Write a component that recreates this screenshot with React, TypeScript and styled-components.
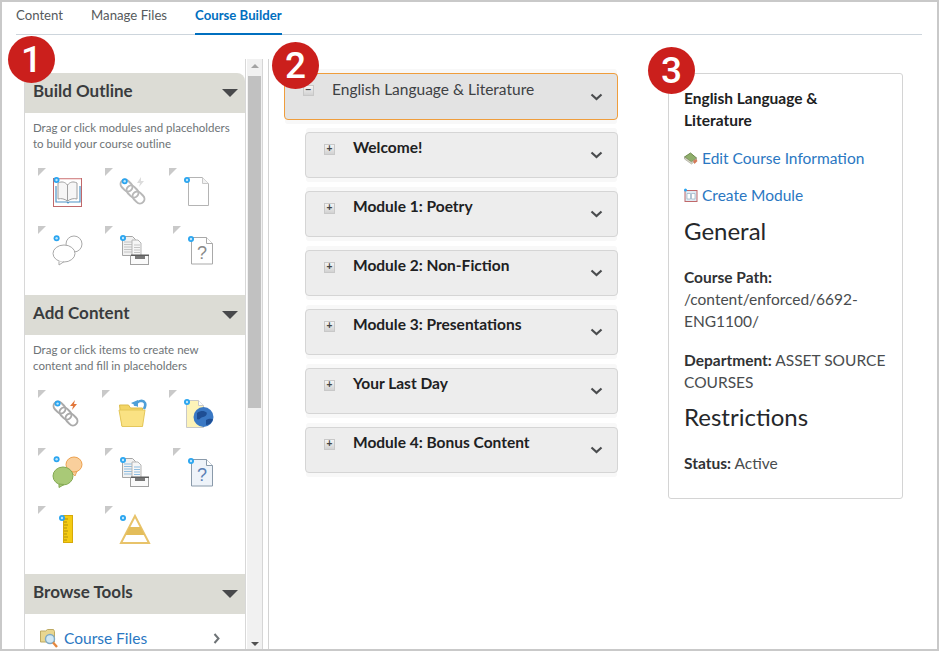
import React from 'react';
import styled, { createGlobalStyle } from 'styled-components';

const GlobalStyle = createGlobalStyle`
  html, body { margin: 0; padding: 0; background: #fff; }
  * { box-sizing: border-box; }
`;

const Page = styled.div`
  position: relative;
  width: 939px;
  height: 651px;
  border: 2px solid #c9c9c9;
  overflow: hidden;
  display: flex;
  flex-direction: column;
  font-family: Lato, 'Liberation Sans', sans-serif;
  color: #494c4e;
  background: #fff;
`;

const Badge = styled.div<{ $left: number; $top: number }>`
  position: absolute;
  left: ${(p) => p.$left}px;
  top: ${(p) => p.$top}px;
  width: 47px;
  height: 47px;
  border-radius: 50%;
  background: #cb1f1c;
  color: #fff;
  font: 500 37px/47px Roboto, 'Liberation Sans', sans-serif;
  text-align: center;
  z-index: 5;
`;

const Tabs = styled.nav`
  flex: none;
  height: 33px;
  margin: 0 15px 0 14px;
  display: flex;
  gap: 28px;
  border-bottom: 1px solid #cdd5dc;
`;

const Tab = styled.a<{ $active?: boolean }>`
  height: 33px;
  padding-top: 5px;
  font-size: 13.2px;
  line-height: 16px;
  font-weight: ${(p) => (p.$active ? 700 : 400)};
  color: ${(p) => (p.$active ? '#006fbf' : '#565a5c')};
  border-bottom: ${(p) => (p.$active ? '2px solid #006fbf' : 'none')};
`;

const Main = styled.div`
  flex: 1;
  min-height: 0;
  display: flex;
  padding-top: 24px;
`;

const Sidebar = styled.aside`
  flex: none;
  width: 267px;
  padding-left: 22px;
  display: flex;
  border-right: 1px solid #d3d3d3;
`;

const Panels = styled.div`
  flex: none;
  width: 222px;
  padding-top: 14px;
  overflow: hidden;
  border-left: 1px solid #d8d8d8;
  border-right: 1px solid #d8d8d8;
`;

const PanelHeader = styled.div<{ $rounded?: boolean }>`
  height: 40px;
  padding: 0 7px 0 8px;
  display: flex;
  align-items: center;
  justify-content: space-between;
  background: #dcdcd5;
  border-radius: ${(p) => (p.$rounded ? '8px 8px 0 0' : '0')};
`;

const PanelTitle = styled.span`
  margin-bottom: 6px;
  font-size: 17px;
  font-weight: 700;
  color: #3a3c3e;
`;

const Caret = styled.span`
  width: 0;
  height: 0;
  border-left: 8px solid transparent;
  border-right: 8px solid transparent;
  border-top: 8px solid #48494b;
`;

const PanelBody = styled.div<{ $height: number }>`
  height: ${(p) => p.$height}px;
  padding-top: 7px;
`;

const Hint = styled.p`
  margin: 0 0 16px 8px;
  font-size: 11.5px;
  line-height: 16px;
  color: #6e7376;
`;

const TileGrid = styled.div`
  display: grid;
  grid-template-columns: repeat(3, 67px);
  grid-auto-rows: 58px;
  padding-left: 13px;
`;

const Tile = styled.div<{ $nudge?: number }>`
  position: relative;
  padding: 8px 0 0 14px;
  &::before {
    content: '';
    position: absolute;
    left: ${(p) => p.$nudge ?? 0}px;
    top: 0;
    width: 8px;
    height: 8px;
    background: #c9c9c9;
    clip-path: polygon(0 0, 100% 0, 0 100%);
  }
  svg { display: block; overflow: visible; }
`;

const ToolRow = styled.div`
  display: flex;
  align-items: center;
  padding: 14px 0 0 14px;
  gap: 5px;
`;

const ToolLink = styled.a`
  flex: 1;
  font-size: 15.5px;
  line-height: 20px;
  color: #2a77c2;
`;

const ToolChevron = styled.svg`
  margin-right: 24px;
`;

const Scrollbar = styled.div`
  flex: none;
  width: 16px;
  margin-left: 1px;
  position: relative;
  background: #f1f1f1;
  border-right: 1px solid #d6d6d6;
`;

const ScrollThumb = styled.div`
  position: absolute;
  left: 1px;
  right: 1px;
  top: 17px;
  height: 332px;
  background: #c1c1c1;
`;

const ScrollArrow = styled.span<{ $down?: boolean }>`
  position: absolute;
  left: 4px;
  ${(p) => (p.$down ? 'bottom: 3px;' : 'top: 5px;')}
  width: 0;
  height: 0;
  border-left: 4px solid transparent;
  border-right: 4px solid transparent;
  ${(p) => (p.$down ? 'border-top: 4px solid #505050;' : 'border-bottom: 4px solid #a3a3a3;')}
`;

const Outline = styled.section`
  flex: none;
  width: 349px;
  padding: 14px 0 0 15px;
`;

const OutlineCard = styled.div<{ $root?: boolean }>`
  height: ${(p) => (p.$root ? 47 : 46)}px;
  margin: ${(p) => (p.$root ? '0 0 12px' : '0 0 13px 21px')};
  padding-top: ${(p) => (p.$root ? 6 : 5)}px;
  display: flex;
  align-items: flex-start;
  background: ${(p) => (p.$root ? '#e3e3e3' : '#ededed')};
  border: 1px solid ${(p) => (p.$root ? '#ef9d3c' : '#d5d5d5')};
  border-radius: 4px;
  box-shadow: 0 5px 0 -1px #f8f8f8, 0 -5px 0 -1px #f8f8f8;
`;

const Expander = styled.span<{ $root?: boolean }>`
  flex: none;
  width: 11px;
  height: 11px;
  margin: ${(p) => (p.$root ? 5 : 6)}px 0 0 18px;
  border: 1px solid #c8c8c8;
  background: linear-gradient(#f4f4f4, #d2d2d2);
  font: 700 10px/8px 'Liberation Sans', sans-serif;
  color: #444;
  text-align: center;
`;

const CardTitle = styled.span<{ $root?: boolean }>`
  flex: 1;
  margin-left: 18px;
  font-size: 15.5px;
  line-height: 18px;
  font-weight: ${(p) => (p.$root ? 400 : 700)};
  color: ${(p) => (p.$root ? '#3e4143' : '#202122')};
`;

const CardChevron = styled.svg`
  flex: none;
  margin: 13px 14px 0 0;
`;

const Details = styled.section`
  flex: none;
  margin: 14px 0 0 50px;
  width: 235px;
  height: 426px;
  padding: 13px 15px 0;
  border: 1px solid #d4d4d4;
  border-radius: 3px;
  font-size: 15.5px;
  line-height: 22px;
  color: #494c4e;
`;

const DetailTitle = styled.div`
  font-weight: 700;
  color: #202122;
  margin-bottom: 16px;
`;

const ActionLink = styled.a`
  display: flex;
  align-items: center;
  gap: 4px;
  height: 22px;
  margin-bottom: 15px;
  color: #2a77c2;
`;

const Heading = styled.h2<{ $pull: number }>`
  margin: -${(p) => p.$pull}px 0 21px;
  font-size: 24px;
  line-height: 29px;
  font-weight: 400;
  color: #25272a;
`;

const Field = styled.p`
  margin: 0 0 17px;
  b { color: #303234; }
`;

const Dot = ({ x, y }: { x: number; y: number }) => (
  <>
    <circle cx={x} cy={y} r={3} fill="#2aa5f0" />
    <circle cx={x} cy={y} r={1.2} fill="#bfe6fb" />
  </>
);

const Glyph = ({ children }: { children: React.ReactNode }) => (
  <svg width="32" height="32" viewBox="0 0 32 32">
    {children}
  </svg>
);

const IconBook = () => (
  <Glyph>
    <rect x="1.5" y="2.5" width="28" height="28" fill="#fff" stroke="#c0686a" />
    <path d="M2 3h27" stroke="#eebcbc" />
    <path d="M4 10v16h11l1 1 1-1h11V10" fill="none" stroke="#4f93c6" strokeWidth="1.2" />
    <path d="M6 7c4-2 7-1 9.500 2v16c-3-2-6-3-9.500-2zM25 7c-4-2-7-1-9.500 2v16c3-2 6-3 9.500-2z" fill="#f6f6f6" stroke="#a0a0a0" />
    <Dot x={4.5} y={4} />
  </Glyph>
);

const Chain = ({ stroke }: { stroke: string }) => (
  <g transform="translate(13.5 15.5) rotate(-45)" fill="none" stroke={stroke} strokeWidth="2">
    <rect x="-4.500" y="-15" width="9" height="13" rx="4.500" />
    <rect x="-4.500" y="-6.500" width="9" height="13" rx="4.500" />
    <rect x="-4.500" y="2" width="9" height="13" rx="4.500" />
  </g>
);

const IconChain = () => (
  <Glyph>
    <Chain stroke="#b8b8b8" />
    <path d="M22 1l-4 6 3 0-1 4 5-6-3 0z" fill="#dcdcdc" />
    <Dot x={5.7} y={5.3} />
  </Glyph>
);

const IconPage = () => (
  <Glyph>
    <path d="M2.5 1.500h14l6 6v22h-20z" fill="#fff" stroke="#b4b4b4" />
    <path d="M16.500 1.500v6h6" fill="#f2f2f2" stroke="#c8c8c8" />
    <Dot x={1} y={4} />
  </Glyph>
);

const IconBubbles = () => (
  <Glyph>
    <ellipse cx="22" cy="10" rx="8" ry="8" fill="#fff" stroke="#a9a9a9" />
    <ellipse cx="12" cy="19.500" rx="11" ry="8.500" fill="#fff" stroke="#a9a9a9" />
    <path d="M7 27.500l0 3.500 5-3.400" fill="#fff" stroke="#a9a9a9" />
    <Dot x={4.6} y={4.3} />
  </Glyph>
);

const IconStack = ({ tint }: { tint: string }) => (
  <Glyph>
    <path d="M3.500 2.500h10l3 3v16h-13z" fill="#f1f1f1" stroke="#a5a5a5" />
    <path d="M5 8h10M5 10.500h10M5 13h10M5 15.500h10M5 18h10" stroke={tint} />
    <path d="M13 6h6l3 3v13h-9z" fill="#f6f6f6" stroke="#b5b5b5" />
    <path d="M15 11h6M15 13.500h6M15 16h6M15 18.500h6" stroke={tint} />
    <rect x="11.500" y="21.500" width="18" height="9" fill="#fafafa" stroke="#a0a0a0" />
    <path d="M12 20.500h18v1.500H12z" fill="#5e5e5e" />
    <path d="M16 22h10v3H16z" fill="#777" />
    <Dot x={4} y={4} />
  </Glyph>
);

const IconQuestion = ({ fill, stroke, color }: { fill: string; stroke: string; color: string }) => (
  <Glyph>
    <path d="M5.500 3.500h15l6 6v20.500h-21z" fill={fill} stroke={stroke} />
    <path d="M20.500 3.500v6h6" fill="#fff" stroke={stroke} />
    <text x="16" y="25" textAnchor="middle" fontSize="18" fontFamily="'Liberation Sans', sans-serif" fill={color}>
      ?
    </text>
    <Dot x={5} y={5} />
  </Glyph>
);

const IconChainColor = () => (
  <Glyph>
    <Chain stroke="#aaaaaa" />
    <path d="M23 2l-5 6 3 0-1 4 5-6-3 0z" fill="#e2763a" />
    <Dot x={5.6} y={5.6} />
  </Glyph>
);

const IconFolder = () => (
  <Glyph>
    <path d="M0.500 7h9l2 3h12v18H3z" fill="#f3d565" stroke="#dcbc4a" />
    <path d="M0 12h26l-2.500 16.500H3z" fill="#fae283" stroke="#e4c75b" />
    <path d="M16 8c1-5 8-7 10-3 1 2 0 4-1 6" fill="none" stroke="#4f9fd8" strokeWidth="2.6" />
    <path d="M12 5l7-3v7z" fill="#4f9fd8" />
  </Glyph>
);

const IconGlobe = () => (
  <Glyph>
    <path d="M0.500 2.500h12l5 5v22h-17z" fill="#fdf3b8" stroke="#c9c9c9" />
    <path d="M12.500 2.500v5h5" fill="#fff" stroke="#c9c9c9" />
    <circle cx="17.500" cy="19" r="10" fill="#3a78c4" />
    <path d="M11 15c4-3 7-2 9-1s0 5-3 5-3 4-6 2zM20 22c3-2 6-1 7-1-1 3-3 6-7 6z" fill="#1e4e94" />
    <Dot x={1} y={4} />
  </Glyph>
);

const IconBubblesColor = () => (
  <Glyph>
    <path d="M25 15l-2 5-4-4z" fill="#f8cf9a" stroke="#e9a55c" />
    <ellipse cx="22" cy="8.500" rx="8" ry="7.500" fill="#f9cf9c" stroke="#eda14f" />
    <ellipse cx="11" cy="20" rx="10" ry="9" fill="#a9c977" stroke="#83a952" />
    <path d="M7 28l0 3.500 5-3z" fill="#a9c977" stroke="#83a952" />
    <Dot x={4.6} y={3.3} />
  </Glyph>
);

const IconRuler = () => (
  <Glyph>
    <rect x="11.500" y="1.500" width="9" height="27" fill="#f4cb12" stroke="#d6a90a" />
    <path d="M12 5h4M12 8h3M12 11h4M12 14h3M12 17h4M12 20h3M12 23h4M12 26h3" stroke="#a3840e" strokeWidth="0.8" />
    <Dot x={10} y={4} />
  </Glyph>
);

const IconPyramid = () => (
  <Glyph>
    <path d="M16 2l14 27H2z" fill="#fff" stroke="#e8c36a" strokeWidth="2" />
    <path d="M10.500 13h11l4 8h-19z" fill="#e3bd5a" />
    <Dot x={4} y={4} />
  </Glyph>
);

const IconCourseFiles = () => (
  <svg width="20" height="20" viewBox="0 0 20 20">
    <path d="M1.500 3h5l2-1.500h6l1 2V14h-14z" fill="#e8d690" stroke="#bda962" />
    <circle cx="11" cy="11" r="4.500" fill="#cfe8f6" stroke="#7fa9c4" strokeWidth="1.400" />
    <path d="M14 14.500l4 4.500" stroke="#e5873d" strokeWidth="2.400" />
  </svg>
);

const IconEdit = () => (
  <svg width="14" height="14" viewBox="0 0 14 14">
    <path d="M0.500 6l6-4 6 5-5 4z" fill="#8fae6b" stroke="#6d8a4d" />
    <path d="M0.500 6v2l7 5 5-4V7l-5 4z" fill="#d9d9c8" stroke="#8a8a7a" strokeWidth="0.5" />
    <path d="M9 10l3-2 1.500 2-3 3z" fill="#d67a58" />
  </svg>
);

const IconModule = () => (
  <svg width="14" height="14" viewBox="0 0 14 14">
    <rect x="1" y="2.500" width="12" height="11" fill="#dfeaf3" stroke="#c0686a" />
    <path d="M3 5.500h3.500v5.500H3zM7.500 5.500H11v5.500H7.500z" fill="#fff" stroke="#88a4bb" strokeWidth="0.6" />
    <circle cx="1.500" cy="2" r="1.500" fill="#2aa5f0" />
  </svg>
);

const buildTiles = [
  { nudge: 0, icon: <IconBook /> },
  { nudge: 0, icon: <IconChain /> },
  { nudge: -3, icon: <IconPage /> },
  { nudge: 0, icon: <IconBubbles /> },
  { nudge: 0, icon: <IconStack tint="#c4c4c4" /> },
  { nudge: 1, icon: <IconQuestion fill="#fff" stroke="#a9a9a9" color="#8a8a8a" /> },
];

const addTiles = [
  { nudge: 0, icon: <IconChainColor /> },
  { nudge: -3, icon: <IconFolder /> },
  { nudge: -3, icon: <IconGlobe /> },
  { nudge: 0, icon: <IconBubblesColor /> },
  { nudge: 0, icon: <IconStack tint="#8fbde0" /> },
  { nudge: 1, icon: <IconQuestion fill="#eef3f9" stroke="#8a9aaa" color="#5b7fb5" /> },
  { nudge: 0, icon: <IconRuler /> },
  { nudge: 0, icon: <IconPyramid /> },
];

const modules = ['Welcome!', 'Module 1: Poetry', 'Module 2: Non-Fiction', 'Module 3: Presentations', 'Your Last Day', 'Module 4: Bonus Content'];

const Card = ({ title, root }: { title: string; root?: boolean }) => (
  <OutlineCard $root={root}>
    <Expander $root={root}>{root ? '−' : '+'}</Expander>
    <CardTitle $root={root}>{title}</CardTitle>
    <CardChevron width="13" height="8" viewBox="0 0 13 8" fill="none" stroke="#4a4c4e" strokeWidth="2.2">
      <path d="M1.500 1.500L6.500 6l5-4.500" />
    </CardChevron>
  </OutlineCard>
);

export default function App() {
  return (
    <Page>
      <GlobalStyle />
      <Badge $left={6} $top={34}>1</Badge>
      <Badge $left={270} $top={40}>2</Badge>
      <Badge $left={646} $top={45}>3</Badge>

      <Tabs>
        <Tab>Content</Tab>
        <Tab>Manage Files</Tab>
        <Tab $active>Course Builder</Tab>
      </Tabs>

      <Main>
        <Sidebar>
          <Panels>
            <PanelHeader $rounded>
              <PanelTitle>Build Outline</PanelTitle>
              <Caret />
            </PanelHeader>
            <PanelBody $height={182}>
              <Hint>
                Drag or click modules and placeholders
                <br />
                to build your course outline
              </Hint>
              <TileGrid>
                {buildTiles.map((t, i) => (
                  <Tile key={i} $nudge={t.nudge}>{t.icon}</Tile>
                ))}
              </TileGrid>
            </PanelBody>
            <PanelHeader>
              <PanelTitle>Add Content</PanelTitle>
              <Caret />
            </PanelHeader>
            <PanelBody $height={239}>
              <Hint>
                Drag or click items to create new
                <br />
                content and fill in placeholders
              </Hint>
              <TileGrid>
                {addTiles.map((t, i) => (
                  <Tile key={i} $nudge={t.nudge}>{t.icon}</Tile>
                ))}
              </TileGrid>
            </PanelBody>
            <PanelHeader>
              <PanelTitle>Browse Tools</PanelTitle>
              <Caret />
            </PanelHeader>
            <ToolRow>
              <IconCourseFiles />
              <ToolLink>Course Files</ToolLink>
              <ToolChevron width="8" height="11" viewBox="0 0 8 11" fill="none" stroke="#6e7376" strokeWidth="2">
                <path d="M1.500 1l4 4.500-4 4.500" />
              </ToolChevron>
            </ToolRow>
          </Panels>
          <Scrollbar>
            <ScrollArrow />
            <ScrollThumb />
            <ScrollArrow $down />
          </Scrollbar>
        </Sidebar>

        <Outline>
          <Card root title="English Language & Literature" />
          {modules.map((m) => (
            <Card key={m} title={m} />
          ))}
        </Outline>

        <Details>
          <DetailTitle>English Language &amp; Literature</DetailTitle>
          <ActionLink>
            <IconEdit />
            Edit Course Information
          </ActionLink>
          <ActionLink>
            <IconModule />
            Create Module
          </ActionLink>
          <Heading $pull={5}>General</Heading>
          <Field>
            <b>Course Path:</b>
            <br />
            /content/enforced/6692-ENG1100/
          </Field>
          <Field>
            <b>Department:</b> ASSET SOURCE COURSES
          </Field>
          <Heading $pull={8}>Restrictions</Heading>
          <Field>
            <b>Status:</b> Active
          </Field>
        </Details>
      </Main>
    </Page>
  );
}
